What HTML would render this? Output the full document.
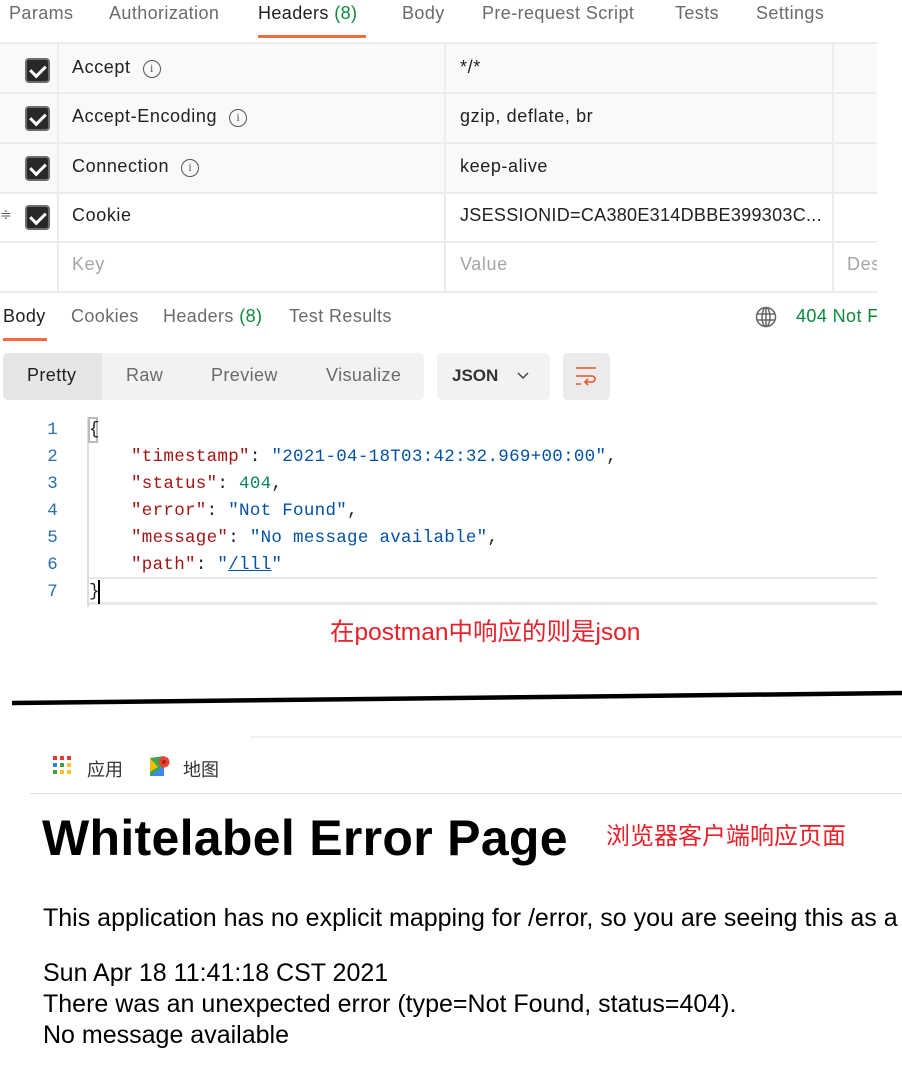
<!DOCTYPE html>
<html><head><meta charset="utf-8"><style>
*{margin:0;padding:0;box-sizing:border-box}
body{width:902px;height:1081px;background:#fff;position:relative;overflow:hidden;font-family:"Liberation Sans","Noto Sans CJK SC",sans-serif;color:#212121}
.a{position:absolute;white-space:nowrap}
.tab{font-size:18px;letter-spacing:0.4px;color:#6b6b6b;top:3px}
.row{position:absolute;left:0;width:877px;height:50px;border-bottom:2px solid #ececec}
.cb{position:absolute;left:25px;width:25px;height:25px;background:#282828;border:2px solid #6e6e6e;border-radius:4px}
.cb:after{content:"";position:absolute;left:6px;top:2px;width:7px;height:12px;border:solid #fff;border-width:0 3px 3px 0;transform:rotate(45deg)}
.vl{position:absolute;top:0;width:2px;height:100%;background:#ececec}
.ct{font-size:18px;letter-spacing:0.6px;top:13px}
.info{display:inline-block;width:18px;height:18px;border:1.5px solid #555;border-radius:50%;font-size:12px;text-align:center;line-height:15px;margin-left:12px;vertical-align:1px;font-family:"Liberation Serif",serif;color:#555;letter-spacing:0}
.code{font-family:"Liberation Mono",monospace;font-size:17.5px;letter-spacing:0.3px}
.ln{color:#2a6fa5;left:40px;width:18px;text-align:right}
.k{color:#a31515}.s{color:#0451a5}.n{color:#098658}
</style></head><body>
<div class="a tab" style="left:9px">Params</div>
<div class="a tab" style="left:109px">Authorization</div>
<div class="a tab" style="left:258px;color:#212121">Headers <span style="color:#0b8a3c">(8)</span></div>
<div class="a tab" style="left:402px">Body</div>
<div class="a tab" style="left:482px">Pre-request Script</div>
<div class="a tab" style="left:675px">Tests</div>
<div class="a tab" style="left:756px">Settings</div>
<div class="a" style="left:258px;top:35px;width:108px;height:3px;background:#f26b3a"></div>

<div class="row" style="top:42px;height:52px;background:#f9f9f9;border-top:2px solid #ececec"><div class="cb" style="top:14px"></div><div class="vl" style="left:57px"></div><div class="vl" style="left:444px"></div><div class="vl" style="left:832px"></div><div class="a ct" style="left:72px">Accept<span class="info">i</span></div><div class="a ct" style="left:460px">*/*</div></div>
<div class="row" style="top:94px;background:#f9f9f9"><div class="cb" style="top:12px"></div><div class="vl" style="left:57px"></div><div class="vl" style="left:444px"></div><div class="vl" style="left:832px"></div><div class="a ct" style="left:72px;top:12px">Accept-Encoding<span class="info">i</span></div><div class="a ct" style="left:460px;top:12px">gzip, deflate, br</div></div>
<div class="row" style="top:144px;background:#f9f9f9"><div class="cb" style="top:12px"></div><div class="vl" style="left:57px"></div><div class="vl" style="left:444px"></div><div class="vl" style="left:832px"></div><div class="a ct" style="left:72px;top:12px">Connection<span class="info">i</span></div><div class="a ct" style="left:460px;top:12px">keep-alive</div></div>
<div class="row" style="top:194px;height:49px"><div class="a" style="left:0;top:12px;font-size:14px;color:#555">≑</div><div class="cb" style="top:11px"></div><div class="vl" style="left:57px"></div><div class="vl" style="left:444px"></div><div class="vl" style="left:832px"></div><div class="a ct" style="left:72px;top:11px">Cookie</div><div class="a ct" style="left:460px;top:11px;letter-spacing:0.3px">JSESSIONID=CA380E314DBBE399303C...</div></div>
<div class="row" style="top:243px;height:50px"><div class="vl" style="left:57px"></div><div class="vl" style="left:444px"></div><div class="vl" style="left:832px"></div><div class="a ct" style="left:72px;top:11px;color:#a6a6a6">Key</div><div class="a ct" style="left:460px;top:11px;color:#a6a6a6">Value</div><div class="a ct" style="left:847px;top:11px;color:#a6a6a6;width:30px;overflow:hidden">Des</div></div>

<div class="a tab" style="left:3px;top:306px;color:#212121">Body</div>
<div class="a tab" style="left:71px;top:306px">Cookies</div>
<div class="a tab" style="left:163px;top:306px">Headers <span style="color:#0b8a3c">(8)</span></div>
<div class="a tab" style="left:289px;top:306px">Test Results</div>
<div class="a" style="left:3px;top:338px;width:44px;height:3px;background:#f26b3a"></div>
<svg class="a" style="left:755px;top:306px" width="22" height="22" viewBox="0 0 22 22" fill="none" stroke="#666" stroke-width="1.5"><circle cx="11" cy="11" r="9.5"/><ellipse cx="11" cy="11" rx="4" ry="9.5"/><path d="M2 8h18M2 14h18M11 1.5v19"/></svg>
<div class="a tab" style="left:796px;top:306px;color:#0b8a3c;width:81px;overflow:hidden">404 Not Fo</div>

<div class="a" style="left:3px;top:353px;width:421px;height:47px;background:#f2f2f2;border-radius:5px"></div>
<div class="a" style="left:3px;top:353px;width:99px;height:47px;background:#e5e5e5;border-radius:5px 0 0 5px"></div>
<div class="a tab" style="left:27px;top:365px;color:#212121">Pretty</div>
<div class="a tab" style="left:126px;top:365px">Raw</div>
<div class="a tab" style="left:211px;top:365px">Preview</div>
<div class="a tab" style="left:326px;top:365px">Visualize</div>
<div class="a" style="left:437px;top:353px;width:113px;height:47px;background:#f2f2f2;border-radius:5px"></div>
<div class="a" style="left:452px;top:366px;font-size:17px;font-weight:bold;color:#333">JSON</div>
<svg class="a" style="left:516px;top:371px" width="14" height="10"><path d="M2 2l5 5 5-5" stroke="#444" stroke-width="1.5" fill="none"/></svg>
<div class="a" style="left:563px;top:353px;width:47px;height:47px;background:#ebebeb;border-radius:5px"></div>
<svg class="a" style="left:575px;top:366px" width="24" height="22" fill="none" stroke="#e8562a" stroke-width="1.6"><path d="M1 2h20M1 10h16a3 3 0 0 1 0 6h-6M13 13l-3 3 3 3M1 18h5"/></svg>

<div class="a" style="left:87px;top:417px;width:2px;height:190px;background:#ddd"></div>
<div class="a" style="left:89px;top:577px;width:788px;height:2px;background:#e8e8e8"></div>
<div class="a" style="left:89px;top:602px;width:788px;height:3px;background:#e8e8e8"></div>
<div class="a" style="left:88px;top:417px;width:10px;height:26px;border:2px solid #bbb"></div>
<div class="a" style="left:98px;top:580px;width:2px;height:24px;background:#000"></div>
<div class="a code ln" style="top:420px">1</div>
<div class="a code ln" style="top:447px">2</div>
<div class="a code ln" style="top:474px">3</div>
<div class="a code ln" style="top:501px">4</div>
<div class="a code ln" style="top:528px">5</div>
<div class="a code ln" style="top:555px">6</div>
<div class="a code ln" style="top:582px">7</div>
<div class="a code" style="left:89px;top:420px">{</div>
<div class="a code" style="left:131px;top:447px"><span class="k">"timestamp"</span>: <span class="s">"2021-04-18T03:42:32.969+00:00"</span>,</div>
<div class="a code" style="left:131px;top:474px"><span class="k">"status"</span>: <span class="n">404</span>,</div>
<div class="a code" style="left:131px;top:501px"><span class="k">"error"</span>: <span class="s">"Not Found"</span>,</div>
<div class="a code" style="left:131px;top:528px"><span class="k">"message"</span>: <span class="s">"No message available"</span>,</div>
<div class="a code" style="left:131px;top:555px"><span class="k">"path"</span>: <span class="s">"<u>/lll</u>"</span></div>
<div class="a code" style="left:89px;top:582px">}</div>
<div class="a" style="left:330px;top:613px;font-size:24.5px;color:#e8202a">在postman中响应的则是json</div>

<svg class="a" style="left:0;top:688px" width="902" height="20"><path d="M12 15 L902 5" stroke="#000" stroke-width="4.5"/></svg>
<div class="a" style="left:250px;top:736px;width:652px;height:2px;background:#f1f2f4"></div>
<svg class="a" style="left:53px;top:756px" width="20" height="20"><g fill="#e53935"><rect x="0" y="0" width="4" height="4"/><rect x="7" y="0" width="4" height="4"/><rect x="14" y="0" width="4" height="4"/></g><g fill="#1e88e5"><rect x="0" y="7" width="4" height="4"/></g><g fill="#43a047"><rect x="7" y="7" width="4" height="4"/><rect x="0" y="14" width="4" height="4"/></g><g fill="#fbc02d"><rect x="14" y="7" width="4" height="4"/><rect x="7" y="14" width="4" height="4"/><rect x="14" y="14" width="4" height="4"/></g></svg>
<div class="a" style="left:87px;top:756px;font-size:18px;color:#333">应用</div>
<svg class="a" style="left:148px;top:754px" width="22" height="24"><path d="M2 4l14-2v20L2 22z" fill="#34a853"/><path d="M2 22l14-10v10z" fill="#4285f4"/><path d="M2 4l8 9-8 5z" fill="#fbbc04"/><circle cx="16" cy="8" r="5.5" fill="#ea4335"/><circle cx="16" cy="8" r="2" fill="#a52714"/></svg>
<div class="a" style="left:183px;top:756px;font-size:18px;color:#333">地图</div>
<div class="a" style="left:30px;top:793px;width:872px;height:1px;background:#dcdcdc"></div>
<div class="a" style="left:42px;top:809px;font-size:50px;font-weight:bold;color:#000;font-family:'Liberation Sans',sans-serif;letter-spacing:0.3px">Whitelabel Error Page</div>
<div class="a" style="left:606px;top:816px;font-size:24px;color:#e8202a">浏览器客户端响应页面</div>
<div class="a" style="left:43px;top:904px;width:859px;overflow:hidden;font-size:25px;color:#000">This application has no explicit mapping for /error, so you are seeing this as a fallback.</div>
<div class="a" style="left:43px;top:958px;font-size:25px;color:#000;line-height:31px">Sun Apr 18 11:41:18 CST 2021<br>There was an unexpected error (type=Not Found, status=404).<br>No message available</div>
</body></html>
